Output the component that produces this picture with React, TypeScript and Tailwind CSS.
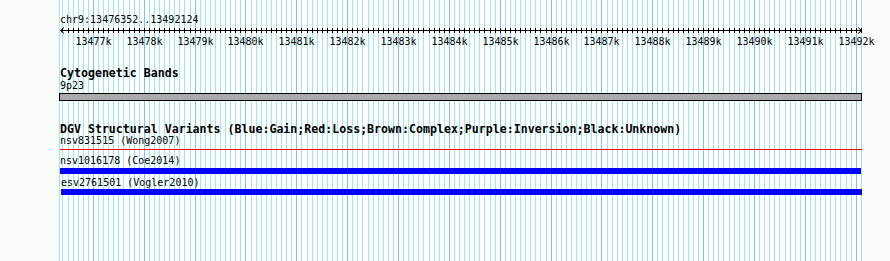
import React from "react";

const START = 13476352;
const END = 13492124;
const X0 = 60;
const W = 802;
const toX = (bp: number) => X0 + ((bp - START) * W) / (END - START);

const lines: { x: number; major: boolean; bp: number }[] = [];
for (let bp = Math.ceil(START / 100) * 100; bp <= END; bp += 100) {
  lines.push({ x: Math.round(toX(bp)) + 0.5, major: bp % 1000 === 0, bp });
}

const mono = { fontFamily: '"DejaVu Sans Mono", "Liberation Mono", monospace' };

export default function App() {
  return (
    <div className="w-[890px] h-[261px] bg-[#fbfdfb] overflow-hidden">
      <div className="relative h-[261px]">
        <svg className="absolute left-0 top-0" width={890} height={261}>
          <rect x={59} y={0} width={803} height={261} fill="#ffffff" />
          <line x1={59.5} y1={0} x2={59.5} y2={261} stroke="#9ee8ea" />
          {lines.map((l) => (
            <line
              key={l.bp}
              x1={l.x}
              y1={0}
              x2={l.x}
              y2={261}
              stroke={l.major ? "#7cc4f0" : "#9ee8ea"}
              strokeWidth={1}
            />
          ))}
        </svg>
        <div className="relative flex flex-col pl-[60px] text-black" style={mono}>
          <div className="pt-[14px] text-[10px] leading-[12px]">chr9:13476352..13492124</div>
          <svg width={890} height={21} className="-ml-[60px] overflow-visible shrink-0">
            <line x1={60} y1={4.5} x2={862} y2={4.5} stroke="#000" />
            <polyline points="64,1.5 60.5,4.5 64,7.5" fill="none" stroke="#000" />
            <polyline points="858,1.5 861.5,4.5 858,7.5" fill="none" stroke="#000" />
            {lines.map((l) => (
              <line key={l.bp} x1={l.x} y1={2} x2={l.x} y2={7} stroke="#000" />
            ))}
            {lines
              .filter((l) => l.major)
              .map((l) => (
                <text
                  key={"t" + l.bp}
                  x={l.x}
                  y={19}
                  textAnchor="middle"
                  fontSize={10}
                  fill="#000"
                  style={mono}
                >
                  {Math.round(l.bp / 1000)}k
                </text>
              ))}
          </svg>
          <div className="mt-[19px] text-[11.6px] leading-[14px] font-bold">Cytogenetic Bands</div>
          <div className="text-[10px] leading-[12px]">9p23</div>
          <div className="mt-[1px] -ml-px w-[803px] h-[8px] bg-[#aaaaaa] border border-black" />
          <div className="mt-[21px] text-[11.6px] leading-[14px] font-bold whitespace-nowrap">
            DGV Structural Variants (Blue:Gain;Red:Loss;Brown:Complex;Purple:Inversion;Black:Unknown)
          </div>
          <div className="text-[10px] leading-[12px] mt-[-1px]">nsv831515 (Wong2007)</div>
          <div className="mt-[2px] w-[802px] h-px bg-[#ff0000]" />
          <div className="mt-[5px] text-[10px] leading-[12px]">nsv1016178 (Coe2014)</div>
          <div className="mt-px w-[801px] h-[6px] bg-[#0000ff]" />
          <div className="mt-[3px] pl-px text-[10px] leading-[12px]">esv2761501 (Vogler2010)</div>
          <div className="ml-px w-[801px] h-[6px] bg-[#0000ff]" />
        </div>
      </div>
    </div>
  );
}
